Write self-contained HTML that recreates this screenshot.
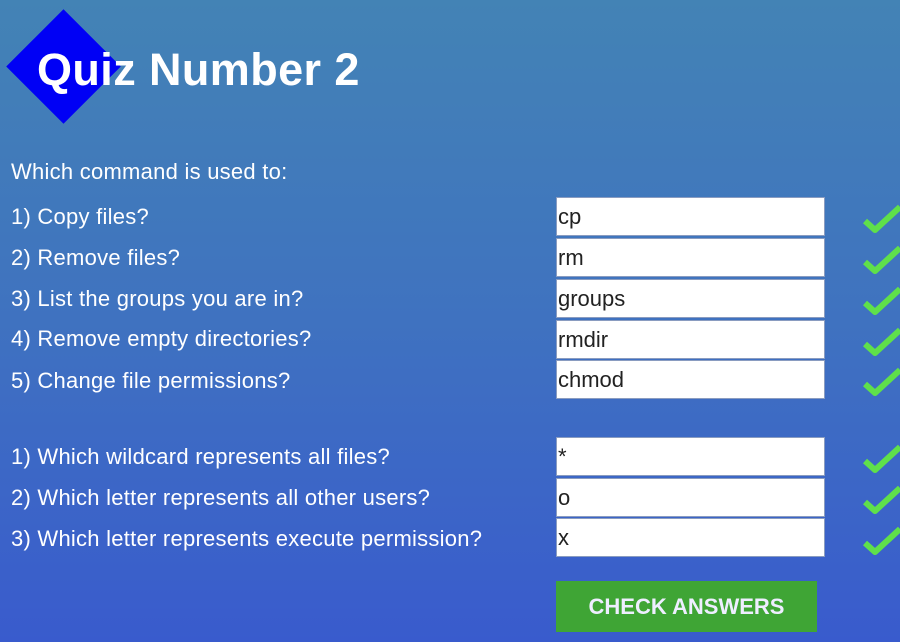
<!DOCTYPE html>
<html><head><style>
html,body{margin:0;padding:0}
body{width:900px;height:642px;overflow:hidden;position:relative;background:linear-gradient(180deg,#4383b5 0%,#3f72c0 50%,#395bcd 100%);font-family:"Liberation Sans",sans-serif;color:#fff}
.dia{position:absolute;left:23px;top:26px;width:81px;height:81px;background:#0000f5;transform:rotate(45deg)}
h1{position:absolute;left:37px;top:45px;margin:0;font-size:45px;font-weight:bold;line-height:50px;letter-spacing:0.4px}
.t{position:absolute;left:11px;font-size:22px;line-height:24px;letter-spacing:0.25px}
.in{position:absolute;left:556px;width:269px;height:39px;background:#fff;border:1px solid #8a9cc0;box-sizing:border-box;color:#222;font-size:22px;line-height:37px;padding-left:1px}
.ck{position:absolute;left:862px;width:40px;height:30px}
.btn{position:absolute;left:556px;top:581px;width:261px;height:51px;background:#3fa535;color:#eef;font-weight:bold;font-size:22px;line-height:51px;text-align:center}
</style></head><body>
<div class="dia"></div>
<h1>Quiz Number 2</h1>
<div class="t" style="top:160px">Which command is used to:</div>
<div class="t" style="top:205px">1) Copy files?</div>
<div class="t" style="top:246px">2) Remove files?</div>
<div class="t" style="top:287px">3) List the groups you are in?</div>
<div class="t" style="top:327px">4) Remove empty directories?</div>
<div class="t" style="top:369px">5) Change file permissions?</div>
<div class="t" style="top:445px">1) Which wildcard represents all files?</div>
<div class="t" style="top:486px">2) Which letter represents all other users?</div>
<div class="t" style="top:527px">3) Which letter represents execute permission?</div>
<div class="in" style="top:197px">cp</div>
<div class="in" style="top:238px">rm</div>
<div class="in" style="top:279px">groups</div>
<div class="in" style="top:320px">rmdir</div>
<div class="in" style="top:360px">chmod</div>
<div class="in" style="top:437px">*</div>
<div class="in" style="top:478px">o</div>
<div class="in" style="top:518px">x</div>
<svg class="ck" style="top:204px" viewBox="0 0 40 30"><path d="M3 17 L13 26 L38 3" fill="none" stroke="#5fe04a" stroke-width="6" stroke-linejoin="round"/></svg>
<svg class="ck" style="top:245px" viewBox="0 0 40 30"><path d="M3 17 L13 26 L38 3" fill="none" stroke="#5fe04a" stroke-width="6" stroke-linejoin="round"/></svg>
<svg class="ck" style="top:286px" viewBox="0 0 40 30"><path d="M3 17 L13 26 L38 3" fill="none" stroke="#5fe04a" stroke-width="6" stroke-linejoin="round"/></svg>
<svg class="ck" style="top:327px" viewBox="0 0 40 30"><path d="M3 17 L13 26 L38 3" fill="none" stroke="#5fe04a" stroke-width="6" stroke-linejoin="round"/></svg>
<svg class="ck" style="top:367px" viewBox="0 0 40 30"><path d="M3 17 L13 26 L38 3" fill="none" stroke="#5fe04a" stroke-width="6" stroke-linejoin="round"/></svg>
<svg class="ck" style="top:444px" viewBox="0 0 40 30"><path d="M3 17 L13 26 L38 3" fill="none" stroke="#5fe04a" stroke-width="6" stroke-linejoin="round"/></svg>
<svg class="ck" style="top:485px" viewBox="0 0 40 30"><path d="M3 17 L13 26 L38 3" fill="none" stroke="#5fe04a" stroke-width="6" stroke-linejoin="round"/></svg>
<svg class="ck" style="top:526px" viewBox="0 0 40 30"><path d="M3 17 L13 26 L38 3" fill="none" stroke="#5fe04a" stroke-width="6" stroke-linejoin="round"/></svg>
<div class="btn">CHECK ANSWERS</div>
</body></html>
